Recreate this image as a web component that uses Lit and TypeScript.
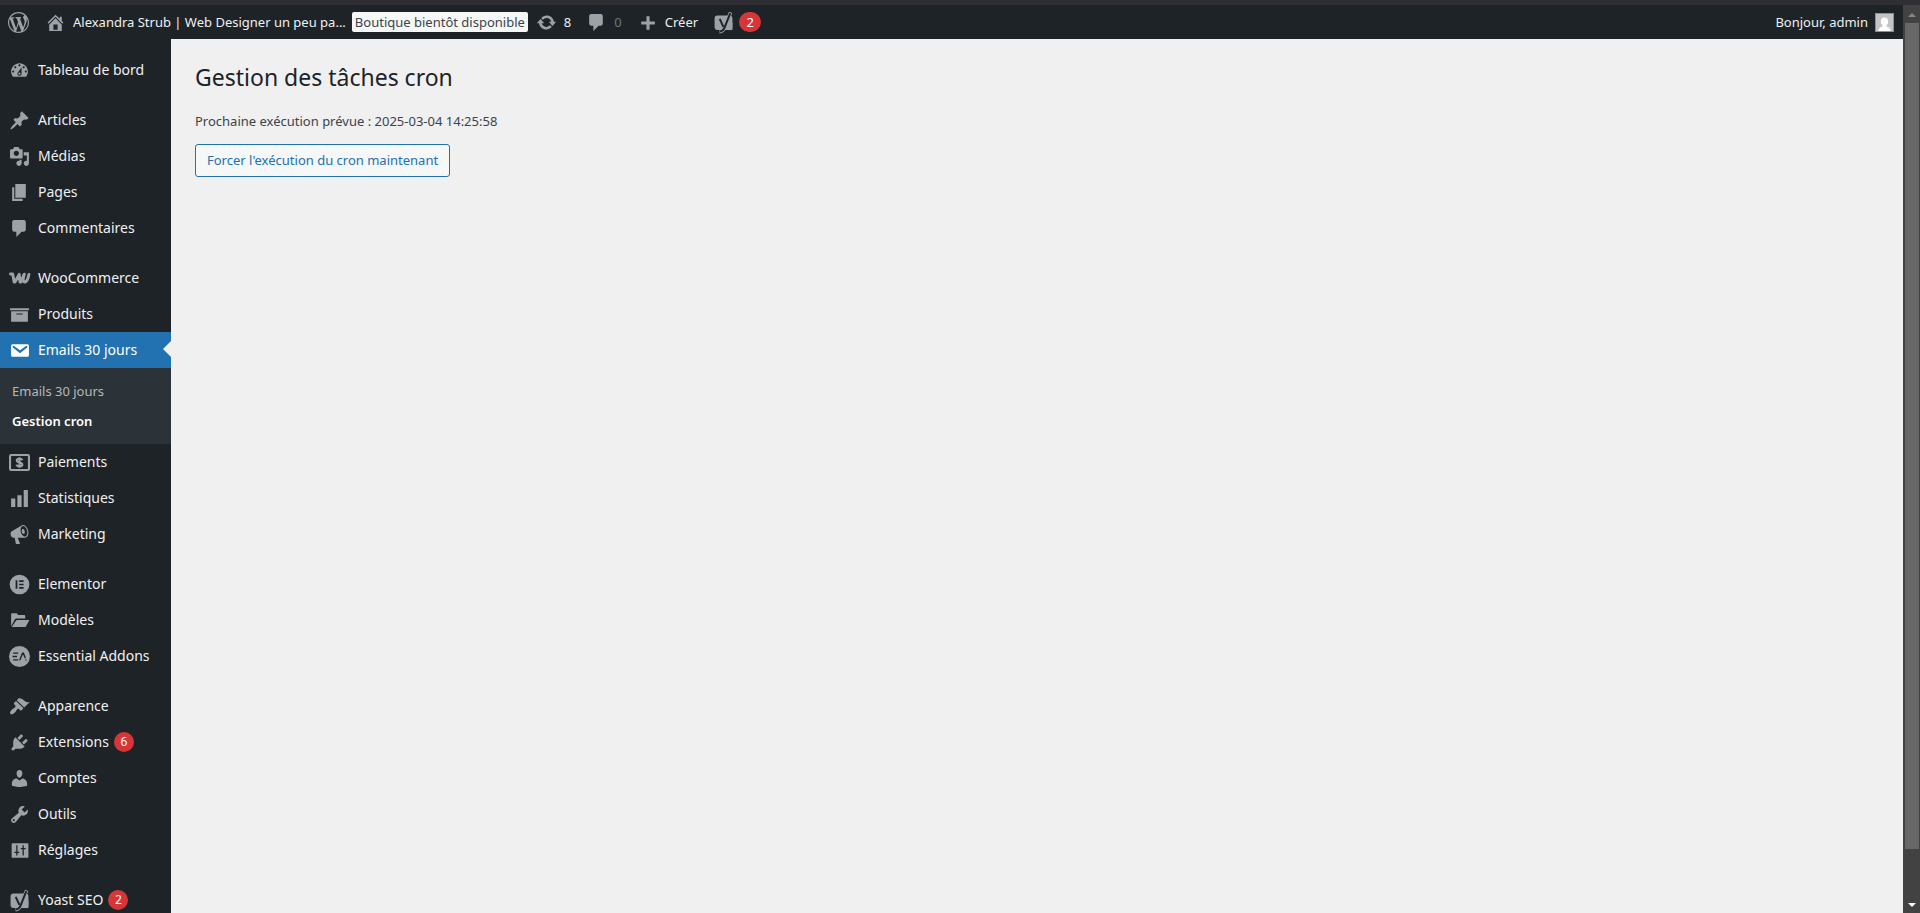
import { LitElement, html, svg, css, nothing, SVGTemplateResult } from "lit";
import { customElement, property } from "lit/decorators.js";
import { classMap } from "lit/directives/class-map.js";

const p = (d: string) => svg`<path d=${d} fill="currentColor" fill-rule="evenodd"/>`;

const ICONS: Record<string, SVGTemplateResult> = {
  wordpress: svg`<path fill="currentColor" d="M20 10c0-5.51-4.49-10-10-10C4.48 0 0 4.49 0 10c0 5.52 4.48 10 10 10 5.51 0 10-4.48 10-10zM7.78 15.37L4.37 6.22c.55-.02 1.17-.08 1.17-.08.5-.06.44-1.13-.06-1.11 0 0-1.45.11-2.37.11-.18 0-.37 0-.58-.01C4.12 2.69 6.87 1.11 10 1.11c2.33 0 4.45.87 6.05 2.34-.68-.11-1.65.39-1.65 1.58 0 .74.45 1.36.9 2.1.35.61.55 1.36.55 2.46 0 1.49-1.4 5-1.4 5l-3.03-8.37c.54-.02.82-.17.82-.17.5-.05.44-1.25-.06-1.22 0 0-1.44.12-2.38.12-.87 0-2.33-.12-2.33-.12-.5-.03-.56 1.2-.06 1.22l.92.08 1.26 3.41zM17.41 10c.24-.64.74-1.87.43-4.25.7 1.29 1.05 2.71 1.05 4.25 0 3.29-1.73 6.24-4.4 7.78.97-2.59 1.94-5.2 2.92-7.78zM6.1 18.09C3.12 16.65 1.11 13.53 1.11 10c0-1.3.23-2.48.72-3.59C3.25 10.3 4.67 14.2 6.1 18.09zm4.03-6.63l2.58 6.98c-.86.29-1.76.45-2.71.45-.79 0-1.57-.11-2.29-.33.81-2.38 1.62-4.74 2.42-7.10z"/>`,
  home: p("M16 8.5l1.53 1.53-1.06 1.06L10 4.6l-6.47 6.49-1.06-1.06L10 2.5l4 4v-2h2v4zm-6-2.46l6 5.99V18H4v-5.97zM12 17v-5H8v5h4z"),
  update: p("M10.2 3.28c3.53 0 6.43 2.61 6.92 6h2.08l-3.5 4-3.5-4h2.32c-.45-1.97-2.21-3.45-4.32-3.45-1.45 0-2.73.71-3.54 1.78L4.95 5.66C6.23 4.2 8.11 3.28 10.2 3.28zm-.4 13.44c-3.52 0-6.43-2.61-6.92-6H.8l3.5-4c1.17 1.33 2.33 2.67 3.5 4H5.48c.45 1.97 2.21 3.45 4.32 3.45 1.45 0 2.73-.71 3.54-1.78l1.71 1.95c-1.28 1.46-3.15 2.38-5.25 2.38z"),
  plus: p("M17 9v3h-5v5H9v-5H4V9h5V4h3v5h5z"),
  dashboard: p("M3.76 16h12.48c1.1-1.37 1.76-3.11 1.76-5 0-4.42-3.58-8-8-8s-8 3.58-8 8c0 1.89.66 3.63 1.76 5zM10 4c.55 0 1 .45 1 1s-.45 1-1 1-1-.45-1-1 .45-1 1-1zM6 6c.55 0 1 .45 1 1s-.45 1-1 1-1-.45-1-1 .45-1 1-1zm8 0c.55 0 1 .45 1 1s-.45 1-1 1-1-.45-1-1 .45-1 1-1zm-5.37 5.55L12 7v6c0 1.1-.9 2-2 2s-2-.9-2-2c0-.57.24-1.08.63-1.45zM4 10c.55 0 1 .45 1 1s-.45 1-1 1-1-.45-1-1 .45-1 1-1zm12 0c.55 0 1 .45 1 1s-.45 1-1 1-1-.45-1-1 .45-1 1-1zm-5 3c0-.55-.45-1-1-1s-1 .45-1 1 .45 1 1 1 1-.45 1-1z"),
  post: p("M10.44 3.02l1.82-1.82 6.36 6.35-1.83 1.82c-1.05-.68-2.48-.57-3.41.36l-.75.75c-.92.93-1.04 2.35-.35 3.41l-1.83 1.82-2.41-2.41-2.8 2.79c-.42.42-3.38 2.71-3.8 2.29s1.86-3.39 2.28-3.81l2.79-2.79L4.1 9.36l1.83-1.82c1.05.69 2.48.57 3.4-.36l.75-.75c.93-.92 1.05-2.35.36-3.41z"),
  media: p("M13 11V4c0-.55-.45-1-1-1h-1.67L9 1H5L3.67 3H2c-.55 0-1 .45-1 1v7c0 .55.45 1 1 1h10c.55 0 1-.45 1-1zM7 4.5c1.38 0 2.5 1.12 2.5 2.5S8.38 9.5 7 9.5 4.5 8.38 4.5 7 5.62 4.5 7 4.5zM14 6h5v10.5c0 1.38-1.12 2.5-2.5 2.5S14 17.88 14 16.5s1.12-2.5 2.5-2.5c.17 0 .34.02.5.05V9h-3V6zm-4 8.05V13h2v3.5c0 1.38-1.12 2.5-2.5 2.5S7 17.88 7 16.5 8.12 14 9.5 14c.17 0 .34.02.5.05z"),
  page: p("M6 15V2h10v13H6zm-1 1h8v2H3V5h2v11z"),
  comment: p("M5 2h9c1.1 0 2 .9 2 2v7c0 1.1-.9 2-2 2h-2l-5 5v-5H5c-1.1 0-2-.9-2-2V4c0-1.1.9-2 2-2z"),
  woo: svg`<g fill="none" stroke="currentColor" stroke-width="2.800" stroke-linejoin="round" stroke-linecap="round"><path d="M1.400 5.700h2.100l1.400 7.600h.8l4-7.200.8 7.200h.8l3.300-7.400"/><path d="M14.200 6.800l-.7 3.600c-.4 2.500 1 3.400 2.400 2.600 1.700-1 2.500-4 3.100-6.900"/></g>`,
  archive: p("M19 4v2H1V4h18zM2 7h16v10H2V7zm11 3V9H7v1h6z"),
  email: p("M3.87 4h13.25C18.37 4 19 4.59 19 5.79v8.42c0 1.19-.63 1.79-1.88 1.79H3.87c-1.25 0-1.88-.6-1.88-1.79V5.79c0-1.2.63-1.79 1.88-1.79zm6.62 8.6l6.74-5.53c.24-.2.43-.66.13-1.07-.29-.41-.82-.42-1.17-.17l-5.7 3.860L4.800 5.830c-.35-.25-.88-.24-1.170.17-.3.41-.11.87.13 1.07z"),
  payments: svg`<rect x="1" y="2.800" width="18" height="14.400" rx="1" fill="none" stroke="currentColor" stroke-width="2"/><path d="M12.700 7.800c-.3-1-1.300-1.400-2.700-1.400-1.500 0-2.600.6-2.600 1.700 0 2.600 5.300 1.200 5.300 3.800 0 1.100-1.100 1.700-2.700 1.700-1.500 0-2.600-.5-2.800-1.600M10 4.900v10.200" fill="none" stroke="currentColor" stroke-width="2"/>`,
  chart: p("M18 18V2h-4v16h4zm-6 0V7H8v11h4zm-6 0v-8H2v8h4z"),
  megaphone: p("M18.15 5.94c.46 1.62.38 3.22-.02 4.48-.42 1.28-1.26 2.18-2.3 2.48-.16.06-.26.06-.4.06-.06.02-.12.02-.18.02-.06.02-.14.02-.22.02h-6.8l2.22 5.5c.02.14-.06.26-.14.34-.08.1-.24.16-.34.16H6.95c-.1 0-.26-.06-.34-.16-.08-.08-.16-.2-.14-.34l-1-5.5H4.25l-.02-.02c-.5.06-1.08-.18-1.54-.62s-.88-1.08-1.06-1.88c-.24-.8-.2-1.56-.02-2.2.18-.62.58-1.08 1.06-1.3l.02-.02 9-5.4c.1-.06.18-.1.24-.16.06-.04.14-.08.24-.12.16-.08.28-.12.5-.18 1.04-.3 2.24.1 3.22.98s1.84 2.24 2.26 3.86zm-2.58 5.98h-.02c.4-.1.74-.34 1.04-.7.58-.7.86-1.76.86-3.04 0-.64-.1-1.3-.28-1.98-.34-1.36-1.02-2.5-1.78-3.24s-1.68-1.1-2.46-.88c-.82.22-1.4.96-1.7 2-.32 1.04-.28 2.36.06 3.72.38 1.36 1 2.5 1.8 3.24.78.74 1.62 1.1 2.48.88zm-2.54-7.08c.22-.04.42-.02.62.04.38.16.76.48 1.02 1s.42 1.2.42 1.78c0 .3-.04.56-.12.8-.18.48-.44.84-.86.94-.34.1-.8-.06-1.14-.4s-.64-.86-.78-1.5c-.18-.62-.12-1.24.02-1.72s.48-.84.82-.94z"),
  elementor: p("M10 .6a9.400 9.400 0 1 0 0 18.800a9.400 9.400 0 1 0 0-18.800zM6.300 6h1.700v8H6.300zM9.700 6h4.200v1.600H9.700zM9.700 9.200h4.200v1.600H9.700zM9.700 12.400h4.200V14H9.700z"),
  folder: p("M2 15.800V4.200C2 3.500 2.500 3 3.200 3h3.600c.8 0 1.200.4 1.500 1.200l.2.500h5.700c.8 0 1.300.5 1.300 1.300v2.200H7.300c-.9 0-1.500.3-2 1zM2.600 16.300l4-6c.3-.6.8-.8 1.400-.8h11.500l-3.300 6c-.3.600-.8.800-1.400.800z"),
  addons: svg`<circle cx="10" cy="10" r="10" fill="currentColor"/><path d="M4 6.800h4.800M3.400 10h4.200M4 13.200h4.800M10.200 13.600l2.700-6.600c.2-.5.600-.5.800 0l1.900 4.600M16.200 12.900v.800" fill="none" stroke="#1d2327" stroke-width="1.300"/>`,
  appearance: p("M14.48 11.06L7.41 3.99l1.5-1.5c.5-.56 2.3-.47 3.51.32 1.21.8 1.43 1.28 2.91 2.1 1.18.64 2.45 1.26 4.45.85zm-.71.71L6.7 4.7 4.93 6.47c-.39.39-.39 1.02 0 1.41l1.06 1.06c.39.39.39 1.03 0 1.42-.6.6-1.43 1.11-2.21 1.69-.35.26-.7.53-1.01.84C1.43 14.23.4 16.08 1.4 17.07c.99 1 2.84-.03 4.18-1.36.31-.31.58-.66.85-1.02.57-.78 1.08-1.61 1.69-2.21.39-.39 1.02-.39 1.41 0l1.06 1.06c.39.39 1.02.39 1.41 0z"),
  plugins: p("M13.11 4.36L9.87 7.6 8 5.73l3.24-3.24c.35-.34 1.05-.2 1.56.32.52.51.66 1.21.31 1.55zm-8 1.77l.91-1.12 9.01 9.01-1.19.84c-.71.71-2.63 1.16-3.82 1.16H6.14L4.9 17.26c-.59.59-1.54.59-2.12 0-.59-.58-.59-1.53 0-2.12l1.24-1.24v-3.88c0-1.13.4-3.19 1.09-3.89zm7.26 3.97l3.24-3.24c.34-.35 1.04-.21 1.55.31.52.51.66 1.21.31 1.55l-3.24 3.25z"),
  users: p("M10 9.25c-2.27 0-2.73-3.44-2.73-3.44C7 4.02 7.82 2 9.97 2c2.16 0 2.98 2.02 2.71 3.81 0 0-.41 3.44-2.68 3.44zm0 2.57L12.72 10c2.39 0 4.52 2.33 4.52 4.53v2.49s-3.65 1.13-7.24 1.13c-3.65 0-7.24-1.13-7.24-1.13v-2.49c0-2.25 1.94-4.48 4.47-4.48z"),
  tools: p("M16.68 9.77c-1.34 1.34-3.3 1.67-4.95.99l-5.41 6.52c-.99.99-2.59.99-3.58 0s-.99-2.59 0-3.57l6.52-5.42c-.68-1.65-.35-3.61.99-4.95 1.28-1.28 3.12-1.62 4.72-1.06l-2.89 2.89 2.82 2.82 2.86-2.87c.53 1.58.18 3.39-1.08 4.65zM3.81 16.21c.4.39 1.04.39 1.43 0 .4-.4.4-1.04 0-1.43-.39-.4-1.03-.4-1.43 0-.39.39-.39 1.03 0 1.43z"),
  settings: svg`<rect x="2.500" y="3" width="16" height="14" rx=".8" fill="currentColor"/><path d="M7.500 5v9.700M5.200 11.800h4.600M13.500 5v9.700M11.200 8.200h4.600" fill="none" stroke="#1d2327" stroke-width="1.200"/>`,
  yoast: svg`<rect x="1.500" y="3.400" width="17" height="13.800" rx="2.800" fill="currentColor"/><path d="M14 10h4.500v7.200H14z" fill="currentColor"/><path d="M16.800.3l-6 15.100c-.8 2.100-2 3.200-4.600 3.300" fill="none" stroke="currentColor" stroke-width="3.400"/><path d="M16.500 1l-5.700 14.400c-.8 2-1.900 3-4.300 3.100M6.400 6.600l3.500 7.600" fill="none" stroke="#1d2327" stroke-width="1.900"/>`,
};

@customElement("wp-icon")
class WpIcon extends LitElement {
  static styles = css`
    :host { display: block; flex: none; width: 21px; height: 21px; }
    svg { display: block; width: 100%; height: 100%; overflow: visible; }
  `;
  @property() name = "";
  render() {
    return html`<svg viewBox="0 0 20 20" aria-hidden="true">${ICONS[this.name]}</svg>`;
  }
}

interface Entry {
  icon: string;
  label: string;
  count?: number;
  children?: string[];
}

const MENU: Entry[][] = [
  [{ icon: "dashboard", label: "Tableau de bord" }],
  [
    { icon: "post", label: "Articles" },
    { icon: "media", label: "Médias" },
    { icon: "page", label: "Pages" },
    { icon: "comment", label: "Commentaires" },
  ],
  [
    { icon: "woo", label: "WooCommerce" },
    { icon: "archive", label: "Produits" },
    { icon: "email", label: "Emails 30 jours", children: ["Emails 30 jours", "Gestion cron"] },
    { icon: "payments", label: "Paiements" },
    { icon: "chart", label: "Statistiques" },
    { icon: "megaphone", label: "Marketing" },
  ],
  [
    { icon: "elementor", label: "Elementor" },
    { icon: "folder", label: "Modèles" },
    { icon: "addons", label: "Essential Addons" },
  ],
  [
    { icon: "appearance", label: "Apparence" },
    { icon: "plugins", label: "Extensions", count: 6 },
    { icon: "users", label: "Comptes" },
    { icon: "tools", label: "Outils" },
    { icon: "settings", label: "Réglages" },
  ],
  [{ icon: "yoast", label: "Yoast SEO", count: 2 }],
];

@customElement("admin-menu")
class AdminMenu extends LitElement {
  static styles = css`
    :host {
      display: block;
      flex: none;
      width: 171px;
      overflow: hidden;
      background: #1d2327;
    }
    nav { display: flex; flex-direction: column; gap: 14px; padding-top: 13px; }
    ul { list-style: none; margin: 0; padding: 0; }
    a { color: #f0f0f1; text-decoration: none; }
    .item {
      position: relative;
      display: flex;
      align-items: center;
      height: 36px;
      padding-left: 9px;
      gap: 8px;
      font-size: 14px;
      line-height: 20px;
      white-space: nowrap;
    }
    .item wp-icon { color: #9ca2a7; }
    .current { background: #2271b1; color: #fff; }
    .current wp-icon { color: #fff; }
    .current::after {
      content: "";
      position: absolute;
      right: 0;
      top: 9px;
      border: 8px solid transparent;
      border-left-width: 0;
      border-right-color: #f0f0f1;
    }
    .sub { background: #2c3338; padding: 8px 0; }
    .sub a {
      display: block;
      padding: 5px 12px;
      font-size: 13px;
      line-height: 20px;
      color: #b4b8bc;
    }
    .sub .selected { color: #fff; font-weight: 600; }
    .count {
      min-width: 20px;
      height: 20px;
      border-radius: 10px;
      background: #d63638;
      color: #fff;
      font-size: 12px;
      text-align: center;
    }
    .label { display: flex; align-items: center; gap: 5px; }
  `;
  render() {
    return html`<nav aria-label="Menu principal">
      ${MENU.map(
        (group) => html`<ul>
          ${group.map(
            (e) => html`<li>
              <a href="#" class=${classMap({ item: true, current: !!e.children })}>
                <wp-icon name=${e.icon}></wp-icon>
                <span class="label">${e.label}${e.count ? html`<span class="count">${e.count}</span>` : nothing}</span>
              </a>
              ${e.children
                ? html`<ul class="sub">
                    ${e.children.map(
                      (c, i) => html`<li><a href="#" class=${classMap({ selected: i === 1 })}>${c}</a></li>`
                    )}
                  </ul>`
                : nothing}
            </li>`
          )}
        </ul>`
      )}
    </nav>`;
  }
}

@customElement("admin-bar")
class AdminBar extends LitElement {
  static styles = css`
    :host {
      display: flex;
      flex: none;
      justify-content: space-between;
      height: 34px;
      background: #1d2327;
      font-size: 13px;
      line-height: 20px;
    }
    .side { display: flex; align-items: center; }
    a {
      display: flex;
      align-items: center;
      gap: 7px;
      color: #f0f0f1;
      text-decoration: none;
      white-space: nowrap;
    }
    wp-icon { color: #9ca2a7; }
    .logo { padding: 0 16px 0 8px; }
    .site { padding-right: 6px; }
    .shop {
      height: 20px;
      padding: 0 3px;
      border-radius: 2px;
      background: #f6f7f7;
      color: #3c434a;
    }
    .updates { padding: 0 15px 0 8px; }
    .comments, .create { padding-right: 15px; }
    .dim { color: #72777c; }
    .yoast { gap: 5px; }
    .count {
      width: 22px;
      height: 20px;
      border-radius: 10px;
      background: #d63638;
      color: #fff;
      text-align: center;
    }
    .account { padding-right: 9px; }
    .avatar { display: block; width: 19px; height: 19px; }
  `;
  render() {
    return html`
      <div class="side">
        <a class="logo" href="#" aria-label="À propos de WordPress"><wp-icon name="wordpress"></wp-icon></a>
        <a class="site" href="#"><wp-icon name="home"></wp-icon>Alexandra Strub | Web Designer un peu pa...</a>
        <a class="shop" href="#">Boutique bientôt disponible</a>
        <a class="updates" href="#"><wp-icon name="update"></wp-icon>8</a>
        <a class="comments" href="#"><wp-icon name="comment"></wp-icon><span class="dim">0</span></a>
        <a class="create" href="#"><wp-icon name="plus"></wp-icon>Créer</a>
        <a class="yoast" href="#" aria-label="Yoast SEO"><wp-icon name="yoast"></wp-icon><span class="count">2</span></a>
      </div>
      <div class="side">
        <a class="account" href="#">Bonjour, admin
          <svg class="avatar" viewBox="0 0 19 19" aria-hidden="true">
            <rect width="19" height="19" fill="#8c8f94" />
            <rect x="1" y="1" width="17" height="17" fill="#c4c4c4" />
            <path d="M9.500 4.500c2.300 0 3.700 1.600 3.700 3.900 0 1.600-.7 3-1.700 3.800v1.200c2 .5 4 1.600 4.300 4.600H3.200c.3-3 2.300-4.100 4.300-4.600v-1.200c-1-.8-1.700-2.200-1.700-3.800 0-2.300 1.400-3.900 3.700-3.900z" fill="#fff" />
          </svg>
        </a>
      </div>
    `;
  }
}

@customElement("app-root")
class AppRoot extends LitElement {
  static styles = css`
    :host {
      display: flex;
      flex-direction: column;
      height: 100vh;
      overflow: hidden;
      background: #f0f0f1;
      font-family: "Noto Sans", "Open Sans", sans-serif;
      color: #3c434a;
    }
    .edge { flex: none; height: 5px; background: #2f2e33; }
    .window { display: flex; flex: 1; min-height: 0; }
    .page { display: flex; flex-direction: column; flex: 1; min-width: 0; }
    .body { display: flex; flex: 1; min-height: 0; }
    main { flex: 1; min-width: 0; padding: 22px 24px; font-size: 13px; line-height: 20px; background: #f0f0f1; }
    h1 { margin: 0; font-size: 23px; font-weight: 400; line-height: 32px; color: #1d2327; }
    p { margin: 18px 0 13px; }
    button {
      height: 33px;
      padding: 0 11px 1px;
      border: 1px solid #2271b1;
      border-radius: 3px;
      background: #f6f7f7;
      color: #2271b1;
      font: inherit;
      white-space: nowrap;
    }
    .scroll {
      display: flex;
      flex-direction: column;
      flex: none;
      width: 17px;
      background: #424242;
    }
    .arrow { display: block; flex: none; width: 17px; height: 18px; }
    .thumb { flex: 0 0 91%; margin: 0 1px 0 2px; background: #686868; }
    .rest { flex: 1; }
  `;
  render() {
    return html`
      <div class="edge"></div>
      <div class="window">
        <div class="page">
          <admin-bar></admin-bar>
          <div class="body">
            <admin-menu></admin-menu>
            <main>
              <h1>Gestion des tâches cron</h1>
              <p>Prochaine exécution prévue : 2025-03-04 14:25:58</p>
              <button type="button">Forcer l'exécution du cron maintenant</button>
            </main>
          </div>
        </div>
        <div class="scroll" aria-hidden="true">
          <svg class="arrow" viewBox="0 0 17 18"><path d="M5 12l4-4 4 4z" fill="#868686" /></svg>
          <div class="thumb"></div>
          <div class="rest"></div>
          <svg class="arrow" viewBox="0 0 17 18"><path d="M5 8l4 4 4-4z" fill="#fff" /></svg>
        </div>
      </div>
    `;
  }
}
